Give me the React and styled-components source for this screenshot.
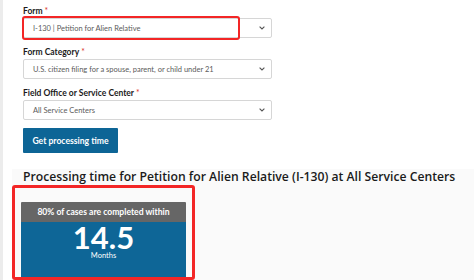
import React from "react";
import styled, { createGlobalStyle } from "styled-components";

const GlobalStyle = createGlobalStyle`
  html, body {
    margin: 0;
    padding: 0;
    background: #ffffff;
  }
  body {
    font-family: Lato, "Open Sans", Arial, sans-serif;
    color: #1b1b1b;
  }
`;

const Page = styled.div`
  width: 474px;
  height: 280px;
  box-sizing: border-box;
  border-left: 3px solid #ececec;
  overflow: hidden;
  display: flex;
  flex-direction: column;
`;

const FormSection = styled.div`
  padding: 6px 0 0 20px;
  display: flex;
  flex-direction: column;
  gap: 9px;
`;

const Field = styled.div`
  display: flex;
  flex-direction: column;
  gap: 1px;
  width: 249px;
`;

const Label = styled.label`
  font-size: 8.5px;
  line-height: 11px;
  font-weight: 700;
  color: #1b1b1b;
`;

const Req = styled.span`
  color: #d9342b;
  margin-left: 2px;
  font-weight: 400;
`;

const SelectWrap = styled.div`
  position: relative;
`;

const SelectBox = styled.div`
  height: 20px;
  box-sizing: border-box;
  border: 1px solid #d6d6d6;
  border-radius: 2px;
  background: #fff;
  display: flex;
  align-items: center;
  justify-content: space-between;
  padding: 0 6px 0 9px;
  font-size: 7.5px;
  color: #5b5b5b;
`;

const Callout = styled.div`
  position: absolute;
  left: -1px;
  top: -2px;
  width: 218px;
  height: 24px;
  box-sizing: border-box;
  border: 2.5px solid #f32626;
  border-radius: 3px;
  pointer-events: none;
`;

const Chevron = () => (
  <svg width="6" height="4" viewBox="0 0 6 4">
    <path d="M0.6 0.6 L3 3 L5.4 0.6" fill="none" stroke="#555" strokeWidth="1.1" />
  </svg>
);

const Button = styled.button`
  align-self: flex-start;
  margin-top: -1px;
  width: 95px;
  height: 25px;
  border: none;
  border-radius: 1px;
  background: #0d6596;
  color: #fff;
  font-family: inherit;
  font-size: 8.6px;
  font-weight: 700;
  padding: 0;
`;

const Results = styled.section`
  margin: 16px 0 0 9px;
  flex: 1;
  background: #fafafa;
  padding-top: 1px;
`;

const Heading = styled.h2`
  margin: 0 0 1px 11px;
  font-family: "Open Sans", Lato, sans-serif;
  font-size: 12.2px;
  line-height: 14px;
  font-weight: 600;
  color: #1b1b1b;
  white-space: nowrap;
`;

const Highlight = styled.div`
  width: 183px;
  height: 95px;
  box-sizing: border-box;
  border: 3px solid #f32626;
  border-radius: 3px;
  padding: 14px 6px 0 6px;
`;

const Card = styled.div`
  display: flex;
  flex-direction: column;
  height: 75px;
`;

const CardHead = styled.div`
  height: 20px;
  background: #666666;
  color: #fff;
  font-size: 8.6px;
  font-weight: 700;
  display: flex;
  align-items: center;
  justify-content: center;
  border-radius: 1px 1px 0 0;
`;

const CardBody = styled.div`
  flex: 1;
  background: #0e6697;
  color: #fff;
  display: flex;
  flex-direction: column;
  align-items: center;
  padding-top: 2px;
`;

const Value = styled.div`
  font-size: 31px;
  line-height: 26px;
  font-weight: 700;
`;

const Unit = styled.div`
  margin-top: 1px;
  font-size: 7.5px;
  line-height: 9px;
`;

const Select = ({ value, highlight }) => (
  <SelectWrap>
    <SelectBox>
      <span>{value}</span>
      <Chevron />
    </SelectBox>
    {highlight && <Callout />}
  </SelectWrap>
);

export default function App() {
  return (
    <>
      <GlobalStyle />
      <Page>
        <FormSection>
          <Field>
            <Label>
              Form<Req>*</Req>
            </Label>
            <Select value="I-130 | Petition for Alien Relative" highlight />
          </Field>
          <Field>
            <Label>
              Form Category<Req>*</Req>
            </Label>
            <Select value="U.S. citizen filing for a spouse, parent, or child under 21" />
          </Field>
          <Field>
            <Label>
              Field Office or Service Center<Req>*</Req>
            </Label>
            <Select value="All Service Centers" />
          </Field>
          <Button>Get processing time</Button>
        </FormSection>
        <Results>
          <Heading>
            Processing time for Petition for Alien Relative (I-130) at All Service Centers
          </Heading>
          <Highlight>
            <Card>
              <CardHead>80% of cases are completed within</CardHead>
              <CardBody>
                <Value>14.5</Value>
                <Unit>Months</Unit>
              </CardBody>
            </Card>
          </Highlight>
        </Results>
      </Page>
    </>
  );
}
